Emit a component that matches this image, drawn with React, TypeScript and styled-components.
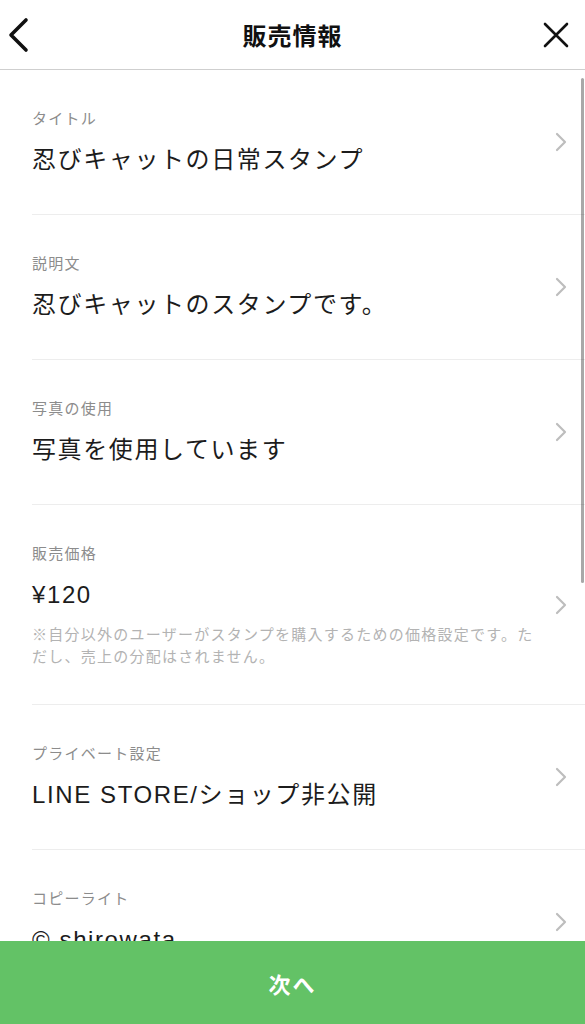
import React from 'react';
import styled, { createGlobalStyle } from 'styled-components';

const GlobalStyle = createGlobalStyle`
  html, body {
    margin: 0;
    padding: 0;
    background: #fff;
  }
  body {
    font-family: "Liberation Sans", "Noto Sans CJK JP", sans-serif;
    -webkit-font-smoothing: antialiased;
  }
`;

const Screen = styled.div`
  display: flex;
  flex-direction: column;
  height: 1024px;
  width: 585px;
  overflow: hidden;
  background: #fff;
`;

const Header = styled.header`
  display: grid;
  grid-template-columns: 70px 1fr 70px;
  align-items: center;
  height: 69px;
  border-bottom: 1px solid #cfcfcf;
  flex-shrink: 0;
`;

const Title = styled.h1`
  margin: 0;
  text-align: center;
  font-size: 24px;
  font-weight: 700;
  letter-spacing: 1px;
  color: #111;
`;

const IconButton = styled.button<{ $align: 'left' | 'right' }>`
  display: flex;
  justify-content: ${p => (p.$align === 'left' ? 'flex-start' : 'flex-end')};
  align-items: center;
  background: none;
  border: none;
  padding: ${p => (p.$align === 'left' ? '0 0 0 6px' : '0 16px 0 0')};
  height: 69px;
  cursor: pointer;
`;

const ScrollArea = styled.div`
  position: relative;
  flex: 1;
  overflow: hidden;
`;

const ScrollIndicator = styled.div`
  position: absolute;
  top: 8px;
  right: 1px;
  width: 3px;
  height: 505px;
  border-radius: 2px;
  background: rgba(0, 0, 0, 0.34);
`;

const Item = styled.div`
  padding-left: 32px;
`;

const ItemInner = styled.div`
  display: flex;
  align-items: center;
  border-bottom: 1px solid #ededed;
  padding-right: 18px;
`;

const ItemText = styled.div`
  flex: 1;
  padding: 39px 10px 39px 0;
`;

const Label = styled.div`
  font-size: 15px;
  line-height: 20px;
  letter-spacing: 1.25px;
  color: #8c8c8c;
`;

const Value = styled.div`
  margin-top: 16px;
  font-size: 24px;
  line-height: 30px;
  letter-spacing: 1.6px;
  color: #1c1c1c;
`;

const Note = styled.p`
  margin: 14px 0 -3px;
  font-size: 15px;
  line-height: 22px;
  letter-spacing: 1.25px;
  color: #b3b3b3;
`;

const Footer = styled.button`
  flex-shrink: 0;
  height: 83px;
  width: 100%;
  border: none;
  background: #63c266;
  color: #fff;
  font-family: inherit;
  font-size: 22px;
  font-weight: 700;
  letter-spacing: 2px;
  cursor: pointer;
`;

const BackIcon = () => (
  <svg width="26" height="36" viewBox="0 0 26 36" fill="none">
    <path d="M20 3 L5 18 L20 33" stroke="#111" strokeWidth="3.6" strokeLinecap="round" strokeLinejoin="round" />
  </svg>
);

const CloseIcon = () => (
  <svg width="26" height="26" viewBox="0 0 26 26" fill="none">
    <path d="M2 2 L24 24 M24 2 L2 24" stroke="#111" strokeWidth="2.6" strokeLinecap="round" />
  </svg>
);

const Chevron = () => (
  <svg width="12" height="20" viewBox="0 0 12 20" fill="none">
    <path d="M2 2 L10 10 L2 18" stroke="#bdbdbd" strokeWidth="2.2" strokeLinecap="round" strokeLinejoin="round" />
  </svg>
);

type Field = { label: string; value: string; note?: string };

const fields: Field[] = [
  { label: 'タイトル', value: '忍びキャットの日常スタンプ' },
  { label: '説明文', value: '忍びキャットのスタンプです。' },
  { label: '写真の使用', value: '写真を使用しています' },
  {
    label: '販売価格',
    value: '¥120',
    note: '※自分以外のユーザーがスタンプを購入するための価格設定です。ただし、売上の分配はされません。',
  },
  { label: 'プライベート設定', value: 'LINE STORE/ショップ非公開' },
  { label: 'コピーライト', value: '© shirowata' },
];

export default function App() {
  return (
    <>
      <GlobalStyle />
      <Screen>
        <Header>
          <IconButton $align="left" aria-label="戻る">
            <BackIcon />
          </IconButton>
          <Title>販売情報</Title>
          <IconButton $align="right" aria-label="閉じる">
            <CloseIcon />
          </IconButton>
        </Header>
        <ScrollArea>
          {fields.map(f => (
            <Item key={f.label}>
              <ItemInner>
                <ItemText>
                  <Label>{f.label}</Label>
                  <Value>{f.value}</Value>
                  {f.note && <Note>{f.note}</Note>}
                </ItemText>
                <Chevron />
              </ItemInner>
            </Item>
          ))}
          <ScrollIndicator />
        </ScrollArea>
        <Footer>次へ</Footer>
      </Screen>
    </>
  );
}
